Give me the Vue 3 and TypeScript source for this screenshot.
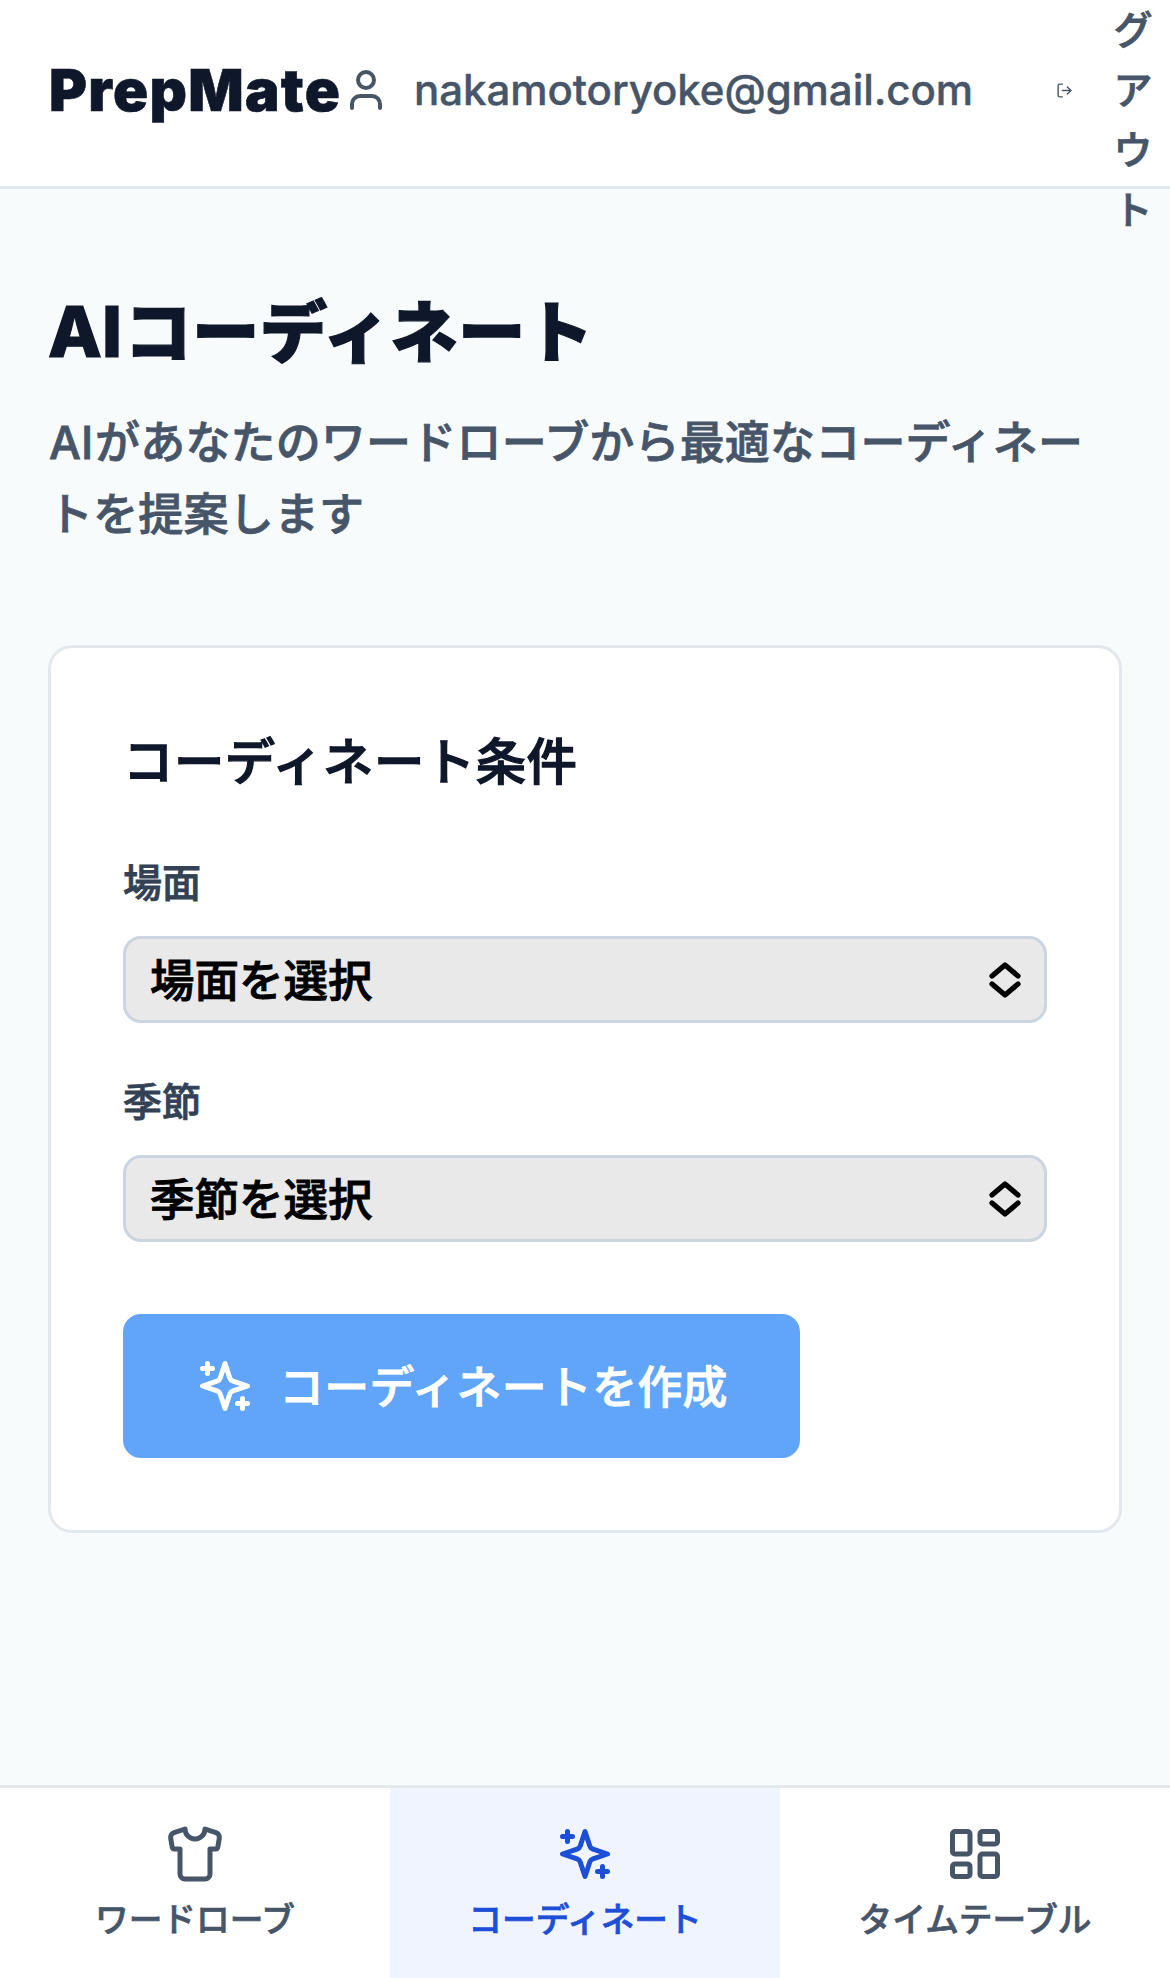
<script setup lang="ts">
import { ref } from 'vue'

type TabId = 'wardrobe' | 'coordinate' | 'timetable'

interface Tab {
  id: TabId
  label: string
}

const email = 'nakamotoryoke@gmail.com'
const scene = ref('')
const season = ref('')
const activeTab = ref<TabId>('coordinate')

const tabs: Tab[] = [
  { id: 'wardrobe', label: 'ワードローブ' },
  { id: 'coordinate', label: 'コーディネート' },
  { id: 'timetable', label: 'タイムテーブル' },
]
</script>

<template>
  <div class="page">
    <header class="header">
      <span class="logo">PrepMate</span>
      <svg class="icon user" viewBox="0 0 24 24">
        <path d="M19 21v-2a4 4 0 0 0-4-4H9a4 4 0 0 0-4 4v2" />
        <circle cx="12" cy="7" r="4" />
      </svg>
      <span class="email">{{ email }}</span>
      <button class="logout" type="button">
        <svg class="icon exit" viewBox="0 0 24 24">
          <path d="M9 21H5a2 2 0 0 1-2-2V5a2 2 0 0 1 2-2h4" />
          <path d="m16 17 5-5-5-5" />
          <path d="M21 12H9" />
        </svg>
        <span class="logout-label">ログアウト</span>
      </button>
    </header>

    <main class="main">
      <h1 class="title"><span class="latin">AI</span>コーディネート</h1>
      <p class="lead"><span class="lead-latin">AI</span>があなたのワードローブから最適なコーディネートを提案します</p>

      <section class="card">
        <h2 class="card-title">コーディネート条件</h2>

        <label class="label" for="scene">場面</label>
        <div class="field">
          <select id="scene" v-model="scene" class="select">
            <option value="">場面を選択</option>
          </select>
          <svg class="chevrons" viewBox="0 0 32 36">
            <path d="M3 14 16 3l13 11M3 22l13 11 13-11" />
          </svg>
        </div>

        <label class="label" for="season">季節</label>
        <div class="field">
          <select id="season" v-model="season" class="select">
            <option value="">季節を選択</option>
          </select>
          <svg class="chevrons" viewBox="0 0 32 36">
            <path d="M3 14 16 3l13 11M3 22l13 11 13-11" />
          </svg>
        </div>

        <button class="submit" type="button">
          <svg class="icon large" viewBox="0 0 24 24">
            <path d="m12 3-1.912 5.813a2 2 0 0 1-1.275 1.275L3 12l5.813 1.912a2 2 0 0 1 1.275 1.275L12 21l1.912-5.813a2 2 0 0 1 1.275-1.275L21 12l-5.813-1.912a2 2 0 0 1-1.275-1.275L12 3Z" />
            <path d="M5 3v4M3 5h4M19 17v4M17 19h4" />
          </svg>
          <span class="submit-label">コーディネートを作成</span>
        </button>
      </section>
    </main>

    <nav class="tabs">
      <button
        v-for="tab in tabs"
        :key="tab.id"
        type="button"
        class="tab"
        :class="{ active: tab.id === activeTab }"
        @click="activeTab = tab.id"
      >
        <svg class="icon large" viewBox="0 0 24 24">
          <path
            v-if="tab.id === 'wardrobe'"
            d="M20.38 3.46 16 2a4 4 0 0 1-8 0L3.62 3.46a2 2 0 0 0-1.34 2.23l.58 3.47a1 1 0 0 0 .99.84H6v10c0 1.1.9 2 2 2h8a2 2 0 0 0 2-2V10h2.15a1 1 0 0 0 .99-.84l.58-3.47a2 2 0 0 0-1.34-2.23z"
          />
          <template v-else-if="tab.id === 'coordinate'">
            <path d="m12 3-1.912 5.813a2 2 0 0 1-1.275 1.275L3 12l5.813 1.912a2 2 0 0 1 1.275 1.275L12 21l1.912-5.813a2 2 0 0 1 1.275-1.275L21 12l-5.813-1.912a2 2 0 0 1-1.275-1.275L12 3Z" />
            <path d="M5 3v4M3 5h4M19 17v4M17 19h4" />
          </template>
          <template v-else>
            <rect x="3" y="3" width="7" height="9" rx="1" />
            <rect x="14" y="3" width="7" height="5" rx="1" />
            <rect x="14" y="12" width="7" height="9" rx="1" />
            <rect x="3" y="16" width="7" height="5" rx="1" />
          </template>
        </svg>
        <span class="tab-label">{{ tab.label }}</span>
      </button>
    </nav>
  </div>
</template>

<style>
html,
body {
  margin: 0;
  overflow: hidden;
}
</style>

<style scoped>
.page,
.page * {
  box-sizing: border-box;
}

.page {
  display: flex;
  flex-direction: column;
  width: 1170px;
  height: 1978px;
  overflow: hidden;
  background: #f8fbfc;
  color: #0f172a;
  font-family: Inter, 'Noto Sans CJK JP', sans-serif;
}

button,
select {
  margin: 0;
  padding: 0;
  border: 0;
  background: none;
  color: inherit;
  font: inherit;
}

.icon {
  flex: none;
  fill: none;
  stroke: currentColor;
  stroke-width: 2;
  stroke-linecap: round;
  stroke-linejoin: round;
}

.header {
  display: flex;
  flex: none;
  align-items: center;
  height: 189px;
  padding: 0 0 6px 49px;
  border-bottom: 3px solid #e2e8ec;
  background: #fff;
  color: #475569;
}

.logo {
  flex: none;
  width: 293px;
  color: #0f172a;
  font-size: 58px;
  font-weight: 900;
  letter-spacing: 1.3px;
  line-height: 84px;
  white-space: nowrap;
  -webkit-text-stroke: 0.6px currentColor;
}

.user {
  width: 48px;
  height: 48px;
}

.email {
  flex: none;
  width: 643px;
  padding-left: 24px;
  font-size: 42px;
  font-weight: 500;
  letter-spacing: -0.06px;
  line-height: 60px;
  white-space: nowrap;
  -webkit-text-stroke: 0.4px currentColor;
}

.logout {
  display: flex;
  flex: none;
  align-items: center;
  height: 0;
  margin-left: 23px;
}

.exit {
  width: 17px;
  height: 17px;
}

.logout-label {
  width: 42px;
  margin-left: 39px;
  font-size: 39px;
  font-weight: 500;
  line-height: 60px;
  word-break: break-all;
  -webkit-text-stroke: 0.8px currentColor;
}

.main {
  flex: 1;
  padding: 96px 48px 0;
}

.title {
  margin: 0;
  font-size: 67.5px;
  font-weight: 900;
  letter-spacing: 0.2px;
  line-height: 96px;
  white-space: nowrap;
  -webkit-text-stroke: 1.2px currentColor;
}

.latin {
  margin-right: 2px;
  font-size: 70px;
  font-weight: 800;
  line-height: 1;
}

.lead {
  margin: 26px 0 0;
  padding-right: 30px;
  color: #475569;
  font-size: 45px;
  font-weight: 500;
  letter-spacing: 0.18px;
  line-height: 72px;
  word-break: break-all;
  -webkit-text-stroke: 0.8px currentColor;
}

.lead-latin {
  margin-right: 1.5px;
  padding-left: 1px;
}

.card {
  height: 888px;
  margin-top: 94px;
  padding: 72px;
  border: 3px solid #e2e8ec;
  border-radius: 24px;
  background: #fff;
}

.card-title {
  margin: 0 0 48px;
  font-size: 50.4px;
  font-weight: 500;
  letter-spacing: 0.5px;
  line-height: 84px;
  -webkit-text-stroke: 1.3px currentColor;
}

.label {
  display: block;
  height: 60px;
  margin-bottom: 24px;
  color: #334155;
  font-size: 39px;
  font-weight: 500;
  line-height: 62px;
  -webkit-text-stroke: 0.8px currentColor;
}

.field {
  position: relative;
  height: 87px;
  margin-bottom: 48px;
}

.select {
  width: 100%;
  height: 87px;
  padding: 4px 27px 0 24px;
  border: 3px solid #cbd5e1;
  border-radius: 18px;
  background: #e9e9e9;
  color: #000;
  font-size: 44.5px;
  font-weight: 500;
  line-height: 77px;
  appearance: none;
  -webkit-text-stroke: 0.9px currentColor;
}

.chevrons {
  position: absolute;
  top: 25.5px;
  right: 26.5px;
  width: 32px;
  height: 36px;
  fill: none;
  stroke: #000;
  stroke-width: 5.2;
  stroke-linecap: round;
  stroke-linejoin: round;
  pointer-events: none;
}

.submit {
  display: flex;
  align-items: center;
  gap: 24px;
  width: 677px;
  height: 144px;
  margin-top: 72px;
  padding: 0 72px;
  border-radius: 18px;
  background: #60a5fa;
  color: #fff;
  font-size: 44.9px;
  font-weight: 500;
  letter-spacing: 0.3px;
  line-height: 72px;
  white-space: nowrap;
}

.submit-label {
  padding-top: 4px;
  -webkit-text-stroke: 0.8px currentColor;
}

.large {
  width: 60px;
  height: 60px;
}

.tabs {
  display: grid;
  flex: none;
  grid-template-columns: repeat(3, 1fr);
  height: 193px;
  border-top: 3px solid #e2e8ec;
  background: #fff;
}

.tab {
  display: flex;
  flex-direction: column;
  align-items: center;
  gap: 12px;
  padding-top: 36px;
  color: #475569;
}

.tab.active {
  background: #eff4fe;
  color: #1d4ed8;
}

.tab-label {
  font-size: 33.7px;
  font-weight: 500;
  line-height: 48px;
  white-space: nowrap;
  -webkit-text-stroke: 0.7px currentColor;
}
</style>
